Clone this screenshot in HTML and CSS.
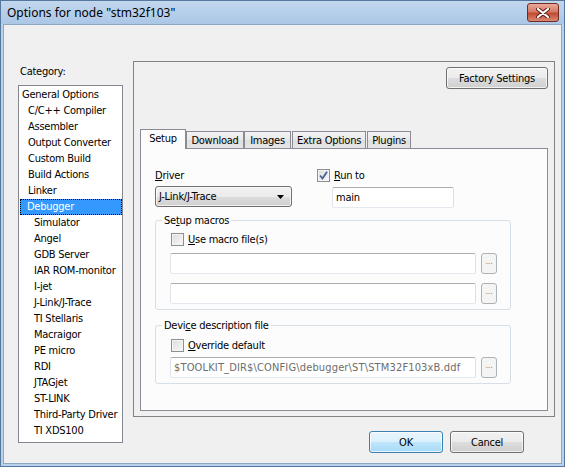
FILE: index.html
```html
<!DOCTYPE html>
<html><head>
<meta charset="utf-8">
<title>Options for node</title>
<link rel="stylesheet" href="styles.css">
</head>
<body>
	<div class="window">
		<div class="titlebar">
			<span class="title">Options for node "stm32f103"</span>
			<div class="close">
				<svg width="14" height="10" viewBox="0 0 14 10">
					<path d="M2 1 L12 9 M12 1 L2 9" stroke="#5a2018" stroke-width="4" stroke-linecap="round"/>
					<path d="M2 1 L12 9 M12 1 L2 9" stroke="#ffffff" stroke-width="2.2" stroke-linecap="round"/>
				</svg>
			</div>
		</div>

		<div class="client">
			<!-- category tree on the left -->
			<div class="category">
				<div class="category-label">Category:</div>
				<ul class="tree">
					<li class="lvl1">General Options</li>
					<li class="lvl2">C/C++ Compiler</li>
					<li class="lvl2">Assembler</li>
					<li class="lvl2">Output Converter</li>
					<li class="lvl2">Custom Build</li>
					<li class="lvl2">Build Actions</li>
					<li class="lvl2">Linker</li>
					<li class="lvl2 selected">Debugger</li>
					<li class="lvl3">Simulator</li>
					<li class="lvl3">Angel</li>
					<li class="lvl3">GDB Server</li>
					<li class="lvl3">IAR ROM-monitor</li>
					<li class="lvl3">I-jet</li>
					<li class="lvl3">J-Link/J-Trace</li>
					<li class="lvl3">TI Stellaris</li>
					<li class="lvl3">Macraigor</li>
					<li class="lvl3">PE micro</li>
					<li class="lvl3">RDI</li>
					<li class="lvl3">JTAGjet</li>
					<li class="lvl3">ST-LINK</li>
					<li class="lvl3">Third-Party Driver</li>
					<li class="lvl3">TI XDS100</li>
				</ul>
			</div>

			<div class="main">
				<div class="panel">
					<div class="panel-top">
						<div class="btn factory">Factory Settings</div>
					</div>

					<div class="tabs">
						<div class="tab active tab-setup">Setup</div>
						<div class="tab tab-download">Download</div>
						<div class="tab tab-images">Images</div>
						<div class="tab tab-extra">Extra Options</div>
						<div class="tab tab-plugins">Plugins</div>
					</div>

					<div class="tab-page">
						<div class="top-row">
							<div class="driver">
								<div class="field-label"><u>D</u>river</div>
								<div class="combo">
									<span>J-Link/J-Trace</span>
									<svg width="7" height="4" viewBox="0 0 7 4"><path d="M0 0 H7 L3.5 4 Z" fill="#000"/></svg>
								</div>
							</div>
							<div class="runto">
								<div class="check-row">
									<span class="checkbox checked">
										<svg width="9" height="9" viewBox="0 0 9 9"><path d="M1 4.5 L3.5 7.5 L8 0.8" fill="none" stroke="#4b5f96" stroke-width="1.8"/></svg>
									</span>
									<span><u>R</u>un to</span>
								</div>
								<div class="textbox runto-box">main</div>
							</div>
						</div>

						<fieldset class="group macros">
							<legend>Se<u>t</u>up macros</legend>
							<div class="check-row">
								<span class="checkbox"></span>
								<span><u>U</u>se macro file(s)</span>
							</div>
							<div class="file-row first">
								<div class="textbox path"></div>
								<div class="browse">...</div>
							</div>
							<div class="file-row second">
								<div class="textbox path"></div>
								<div class="browse">...</div>
							</div>
						</fieldset>

						<fieldset class="group device">
							<legend>Devi<u>c</u>e description file</legend>
							<div class="check-row">
								<span class="checkbox"></span>
								<span><u>O</u>verride default</span>
							</div>
							<div class="file-row">
								<div class="textbox path disabled">$TOOLKIT_DIR$\CONFIG\debugger\ST\STM32F103xB.ddf</div>
								<div class="browse">...</div>
							</div>
						</fieldset>
					</div>
				</div>

				<div class="footer">
					<div class="btn ok">OK</div>
					<div class="btn">Cancel</div>
				</div>
			</div>
		</div>
	</div>
</body></html>
```

FILE: styles.css
```css
 body{
	margin: 0;
	font-family: "DejaVu Sans Condensed", "Liberation Sans", sans-serif;
	font-size: 11px;
	letter-spacing: -0.25px;
	color: #000;
 }

 u{
	text-decoration-thickness: 1px;
	text-underline-offset: 1px;
 }

 /* window frame */
 .window{
	width: 565px;
	height: 467px;
	box-sizing: border-box;
	border: 1px solid #56789f;
	background: #b9d1ea;
	display: flex;
	flex-direction: column;
 }

 .titlebar{
	height: 23px;
	flex: none;
	display: flex;
	align-items: center;
	justify-content: space-between;
	padding: 0 5px 0 6px;
	background: linear-gradient(#c2d7ee, #abc7e6);
 }

 .title{
	font-family: "Noto Sans", "Liberation Sans", sans-serif;
	font-size: 12px;
	letter-spacing: 0;
 }

 .close{
	width: 30px;
	height: 17px;
	border: 1px solid #6e2c22;
	border-radius: 3px;
	display: flex;
	align-items: center;
	justify-content: center;
	background: linear-gradient(#e9a999, #d47a66 45%, #c24a31 55%, #d98a74);
 }

 .client{
	flex: 1;
	margin: 0 2px 2px;
	border: 1px solid #8ea7c2;
	background: #f0f0f0;
	display: flex;
	padding-top: 36px;
 }

 /* category tree */
 .category{
	width: 105px;
	margin-left: 14px;
	display: flex;
	flex-direction: column;
 }

 .category-label{
	margin: 4px 0 0 2px;
	line-height: 13px;
 }

 .tree{
	list-style: none;
	margin: 7px 0 0;
	padding: 1px 0 0;
	height: 358px;
	box-sizing: border-box;
	border: 1px solid #828790;
	background: #fff;
 }

 .tree li{
	height: 16px;
	line-height: 16px;
	white-space: nowrap;
 }

 .lvl1{ padding-left: 3px; }
 .lvl2{ padding-left: 9px; }
 .lvl3{ padding-left: 15px; }

 .tree .selected{
	margin-left: 1px;
	padding-left: 7px;
	background: #3399ff;
	color: #fff;
	outline: 1px dotted #000;
	outline-offset: -1px;
 }

 /* right hand side */
 .main{
	margin-left: 10px;
	width: 422px;
	display: flex;
	flex-direction: column;
 }

 .panel{
	border: 1px solid #838383;
	padding: 5px 6px 5px;
	display: flex;
	flex-direction: column;
 }

 .panel-top{
	display: flex;
	justify-content: flex-end;
 }

 .btn{
	height: 22px;
	box-sizing: border-box;
	border: 1px solid #707070;
	border-radius: 3px;
	display: flex;
	align-items: center;
	justify-content: center;
	background: linear-gradient(#f2f2f2, #ebebeb 50%, #dddddd 51%, #cfcfcf);
	box-shadow: inset 0 0 0 1px rgba(255,255,255,0.7);
 }

 .factory{
	width: 102px;
 }

 /* tabs */
 .tabs{
	display: flex;
	align-items: flex-end;
	height: 20px;
	margin-top: 40px;
 }

 .tab{
	height: 17px;
	box-sizing: border-box;
	margin: 0 0 1px 0;
	border: 1px solid #898c95;
	border-bottom: none;
	display: flex;
	align-items: center;
	justify-content: center;
	background: linear-gradient(#f3f3f3, #e8e8e8 50%, #dedede 51%, #e6e6e6);
 }

 .tab.active{
	position: relative;
	z-index: 1;
	height: 20px;
	margin-bottom: 0;
	padding-bottom: 2px;
	background: #fcfcfc;
 }

 .tab-setup{ width: 46px; }
 .tab-download{ width: 58px; }
 .tab-images{ width: 47px; margin-right: 1px; }
 .tab-extra{ width: 74px; margin-right: 1px; }
 .tab-plugins{ width: 44px; }

 .tab-page{
	margin-top: -1px;
	height: 263px;
	box-sizing: border-box;
	border: 1px solid #898c95;
	background: #fcfcfc;
	padding: 20px 0 0 14px;
 }

 .top-row{
	display: flex;
 }

 .field-label{
	line-height: 13px;
	margin-bottom: 4px;
 }

 .combo{
	width: 137px;
	height: 21px;
	box-sizing: border-box;
	border: 1px solid #707070;
	border-radius: 3px;
	padding: 0 7px 0 3px;
	display: flex;
	align-items: center;
	justify-content: space-between;
	background: linear-gradient(#f2f2f2, #ebebeb 50%, #dddddd 51%, #cfcfcf);
	box-shadow: inset 0 0 0 1px rgba(255,255,255,0.7);
 }

 .runto{
	margin-left: 25px;
 }

 .check-row{
	display: flex;
	align-items: center;
	gap: 4px;
	height: 13px;
 }

 .checkbox{
	width: 13px;
	height: 13px;
	box-sizing: border-box;
	border: 1px solid #8e8f8f;
	background: linear-gradient(135deg, #dcdcdc, #f8f8f8);
	box-shadow: inset 0 0 0 1px #f4f4f4;
	display: flex;
	align-items: center;
	justify-content: center;
 }

 .textbox{
	height: 21px;
	box-sizing: border-box;
	border: 1px solid #abadb3;
	border-color: #abadb3 #dbdfe6 #e3e9ef #e2e3ea;
	border-radius: 2px;
	background: #fff;
	padding: 0 3px;
	display: flex;
	align-items: center;
	white-space: nowrap;
 }

 .runto-box{
	width: 122px;
	margin: 5px 0 0 15px;
 }

 /* group boxes */
 .group{
	width: 356px;
	box-sizing: border-box;
	margin: 6px 0 0;
	padding: 6px 0 5px 14px;
	border: 1px solid #d5dfe5;
	border-radius: 3px;
 }

 .group legend{
	margin-left: -8px;
	padding: 0 2px;
	line-height: 13px;
 }

 .group .check-row{
	margin-left: 1px;
 }

 .group.device{
	margin-top: 9px;
	padding-top: 7px;
 }

 .file-row{
	display: flex;
	gap: 5px;
	margin-top: 7px;
 }

 .file-row.second{
	margin-top: 9px;
 }

 .device .file-row{
	margin-top: 5px;
 }

 .path{
	width: 306px;
 }

 .path.disabled{
	color: #6d6d6d;
	letter-spacing: 0.15px;
	overflow: hidden;
 }

 .browse{
	width: 16px;
	height: 21px;
	box-sizing: border-box;
	border: 1px solid #adb2b5;
	border-radius: 3px;
	background: #f4f4f4;
	color: #838383;
	font-size: 9px;
	line-height: 14px;
	text-align: center;
 }

 /* dialog buttons */
 .footer{
	display: flex;
	justify-content: flex-end;
	gap: 7px;
	margin-top: 14px;
	padding-right: 31px;
 }

 .footer .btn{
	width: 74px;
 }

 .footer .ok{
	border-color: #3c7fb1;
	background: linear-gradient(#eaf6fd, #d9f0fc 50%, #bee6fd 51%, #a7d9f5);
 }
```
